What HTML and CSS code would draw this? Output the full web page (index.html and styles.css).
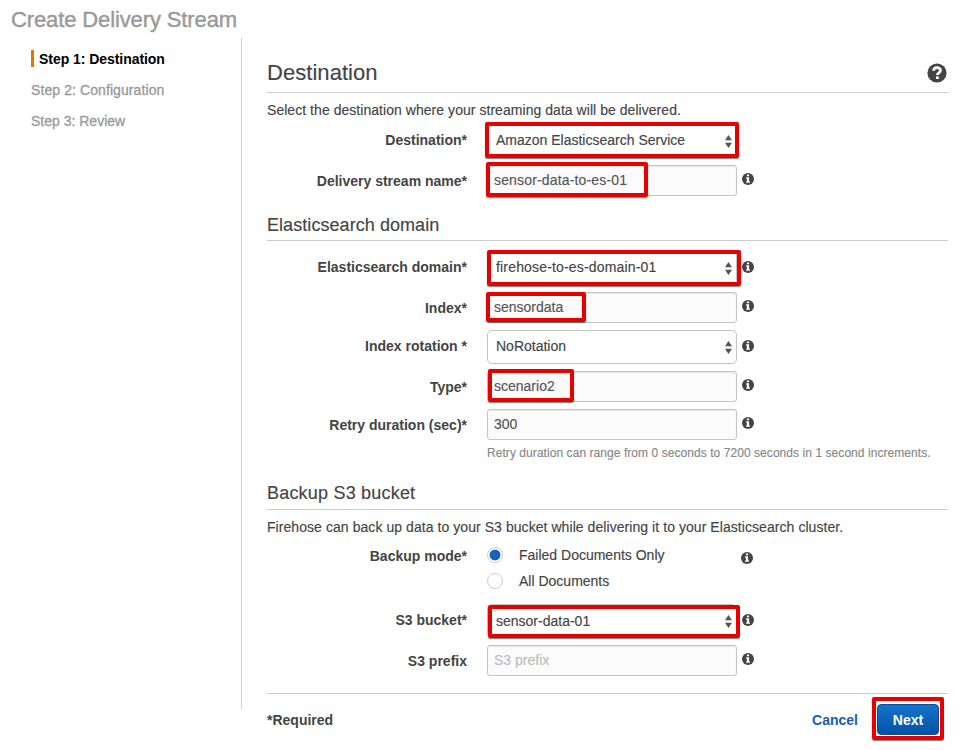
FILE: index.html
```html
<!DOCTYPE html>
<html lang="en">
<head>
<meta charset="utf-8">
<title>Create Delivery Stream</title>
<link rel="stylesheet" href="styles.css">
</head>
<body>
<svg class="defs" width="0" height="0" aria-hidden="true">
  <symbol id="info" viewBox="0 0 12 12"><circle cx="6" cy="6" r="6" fill="#444"/><path fill="#fff" d="M4.9 1.5h2.2v1.8H4.9zM4.1 4.3h3v4.1h.9v1.4H4.1V8.4h.8V5.7h-.8z"/></symbol>
  <symbol id="arrows" viewBox="0 0 7 13"><path fill="#555" d="M3.5 0 7 5.3H0zM3.5 13 0 7.7h7z"/></symbol>
</svg>
<div class="page">
  <header class="title"><span class="t-title">Create Delivery Stream</span></header>
  <div class="columns">
    <nav class="steps">
      <div class="step active"><span class="t-s1">Step 1: Destination</span></div>
      <div class="step"><span class="t-s2">Step 2: Configuration</span></div>
      <div class="step"><span class="t-s3">Step 3: Review</span></div>
    </nav>
    <main class="main">
      <div class="heading first"><h1>Destination</h1>
        <svg class="help" viewBox="0 0 20 20"><circle cx="10" cy="10" r="9.6" fill="#444"/><path d="M6.6 7.8C6.6 3.6 13.5 3.7 13.5 7.5c0 2.5-3.1 2.3-3.1 4.6" fill="none" stroke="#fff" stroke-width="2.7"/><path fill="#fff" d="M9 13.4h2.8V16H9z"/></svg>
      </div>
      <p class="intro"><span class="t-p1">Select the destination where your streaming data will be delivered.</span></p>
      <div class="row r-dest"><label>Destination*</label><div class="select"><span>Amazon Elasticsearch Service</span><svg class="arrows"><use href="#arrows"/></svg><i class="mark m1"></i></div></div>
      <div class="row r-name"><label>Delivery stream name*</label><div class="input"><span class="t-name">sensor-data-to-es-01</span><i class="mark m2"></i></div><svg class="info"><use href="#info"/></svg></div>

      <div class="heading es"><h2>Elasticsearch domain</h2></div>
      <div class="row r-domain"><label>Elasticsearch domain*</label><div class="select"><span class="t-domain">firehose-to-es-domain-01</span><svg class="arrows"><use href="#arrows"/></svg><i class="mark m3"></i></div><svg class="info"><use href="#info"/></svg></div>
      <div class="row r-index"><label>Index*</label><div class="input"><span>sensordata</span><i class="mark m4"></i></div><svg class="info"><use href="#info"/></svg></div>
      <div class="row r-rotation"><label>Index rotation *</label><div class="select"><span>NoRotation</span><svg class="arrows"><use href="#arrows"/></svg></div><svg class="info"><use href="#info"/></svg></div>
      <div class="row r-type"><label>Type*</label><div class="input"><span>scenario2</span><i class="mark m5"></i></div><svg class="info"><use href="#info"/></svg></div>
      <div class="row r-retry"><label>Retry duration (sec)*</label><div class="input"><span>300</span></div><svg class="info"><use href="#info"/></svg></div>
      <p class="hint"><span class="t-hint">Retry duration can range from 0 seconds to 7200 seconds in 1 second increments.</span></p>

      <div class="heading backup"><h2>Backup S3 bucket</h2></div>
      <p class="intro"><span class="t-p2">Firehose can back up data to your S3 bucket while delivering it to your Elasticsearch cluster.</span></p>
      <div class="row r-mode"><label>Backup mode*</label>
        <div class="radios">
          <div class="radio on"><b></b><span>Failed Documents Only</span></div>
          <div class="radio"><b></b><span>All Documents</span></div>
        </div><svg class="info"><use href="#info"/></svg></div>
      <div class="row r-bucket"><label>S3 bucket*</label><div class="select"><span>sensor-data-01</span><svg class="arrows"><use href="#arrows"/></svg><i class="mark m6"></i></div><svg class="info"><use href="#info"/></svg></div>
      <div class="row r-prefix"><label>S3 prefix</label><div class="input empty"><span>S3 prefix</span></div><svg class="info"><use href="#info"/></svg></div>

      <footer class="footer">
        <span class="required">*Required</span>
        <span class="cancel">Cancel</span>
        <div class="next"><span>Next</span><i class="mark m7"></i></div>
      </footer>
    </main>
  </div>
</div>
</body>
</html>
```
FILE: styles.css
```css
* { box-sizing: border-box; }
body {
  margin: 0;
  background: #fff;
  color: #444;
  font: 14px/18px "Liberation Sans", Arial, sans-serif;
}
h1, h2, p { margin: 0; font-weight: 400; }
span, label { white-space: nowrap; }
.defs { display: block; height: 0; }
.page { width: 962px; height: 750px; overflow: hidden; }
.title {
  height: 38px;
  padding: 7px 0 0 11px;
  font-size: 22px;
  line-height: 26px;
  letter-spacing: -.12px;
  color: #999;
  -webkit-text-stroke: .4px #999;
}
.columns { display: flex; align-items: flex-start; }
.steps {
  width: 242px;
  height: 671px;
  padding: 12px 0 0 31px;
  border-right: 1px solid #ccc;
}
.step { height: 17px; margin-bottom: 14px; line-height: 18px; color: #999; -webkit-text-stroke: .3px #999; }
.t-s2 { letter-spacing: .09px; }
.step.active {
  padding-left: 5px;
  border-left: 3px solid #e07700;
  color: #000;
  font-weight: 700;
  letter-spacing: -.05px;
  -webkit-text-stroke: 0;
}
.main { width: 681px; margin-left: 25px; -webkit-text-stroke: .15px; }
.heading {
  display: flex;
  justify-content: space-between;
  border-bottom: 1px solid #ccc;
}
.heading.first { height: 55px; padding-top: 22px; }
.heading.es { height: 31px; margin-top: 14px; padding-top: 4px; }
.heading.backup { height: 32px; margin-top: 17px; padding-top: 4px; }
h1 { font-size: 22px; line-height: 26px; letter-spacing: .05px; }
h2 { font-size: 18px; line-height: 22px; letter-spacing: .06px; }
.backup h2 { letter-spacing: .2px; }
.help { width: 20px; height: 20px; margin: 3px 1px 0 0; }
.intro { height: 18px; margin-top: 8px; }
.t-p1 { letter-spacing: .045px; }
.t-p2 { letter-spacing: .062px; }
.t-name { letter-spacing: .16px; }
.t-domain { letter-spacing: .17px; }
.t-hint { letter-spacing: .06px; }
.row { display: flex; align-items: center; }
.row label { width: 200px; margin-right: 20px; text-align: right; font-weight: 700; -webkit-text-stroke: 0; }
.r-dest label, .r-domain label, .r-rotation label, .r-bucket label { padding-bottom: 2px; }
.select, .input {
  position: relative;
  display: flex;
  align-items: center;
  width: 250px;
  border: 1px solid #c4c4c4;
}
.select { height: 34px; padding: 0 4px 2px 8px; border-radius: 5px; justify-content: space-between; }
.input {
  height: 31px;
  padding: 0 6px 2px;
  border-radius: 3px;
  background: #fbfbfb;
  color: #555;
  box-shadow: inset 0 1px 1px #e8e8e8;
}
.empty { color: #bbb; }
.arrows { width: 7px; height: 13px; margin-top: 2px; }
.info { width: 12px; height: 12px; margin: -3px 0 0 5px; }
.r-dest { margin-top: 5px; }
.r-name { margin-top: 7px; }
.r-domain { margin-top: 10px; }
.r-index { margin-top: 7px; }
.r-rotation { margin-top: 7px; }
.r-type { margin-top: 7px; }
.r-retry { margin-top: 7px; }
.hint { height: 16px; margin: 5px 0 0 220px; font-size: 12px; line-height: 16px; color: #888; }
.r-mode { margin-top: 10px; align-items: flex-start; }
.r-mode label { padding-top: 1px; }
.radios { width: 249px; }
.radio { display: flex; align-items: center; height: 18px; margin-bottom: 8px; }
.radio b {
  width: 16px;
  height: 16px;
  margin-right: 16px;
  border: 1px solid #ccc;
  border-radius: 50%;
}
.radio.on b { background: radial-gradient(circle, #1166bb 0 5px, #fff 5.8px); }
.r-mode .info { margin-top: 6px; }
.r-bucket { margin-top: 6px; }
.r-bucket .select { padding-bottom: 0; }
.r-bucket .arrows { margin-top: 0; }
.r-prefix { margin-top: 7px; }
.footer {
  display: flex;
  align-items: center;
  height: 53px;
  margin-top: 17px;
  border-top: 1px solid #ccc;
  font-weight: 700;
  -webkit-text-stroke: 0;
}
.cancel { margin-left: auto; color: #1a5cb0; }
.next {
  position: relative;
  width: 62px;
  height: 31px;
  margin: -1px 9px 0 19px;
  border: 1px solid #0a4f9c;
  border-radius: 4px;
  background: linear-gradient(#1773cc, #0054a6);
  color: #fff;
  line-height: 30px;
  text-align: center;
}
.mark {
  position: absolute;
  border: 4px solid #e60000;
  border-radius: 2px;
  box-shadow: 0 1px 1px rgba(0, 0, 0, .5);
}
.m1 { left: -3px; top: -3px; width: 254px; height: 36px; }
.m2 { left: -2px; top: -4px; width: 162px; height: 35px; }
.m3 { left: -1px; top: -2px; width: 254px; height: 36px; }
.m4 { left: -2px; top: -1px; width: 100px; height: 30px; }
.m5 { left: 0; top: -3px; width: 86px; height: 33px; }
.m6 { left: 0; top: 0; width: 252px; height: 33px; }
.m7 { left: -6px; top: -8px; width: 72px; height: 43px; }
```
